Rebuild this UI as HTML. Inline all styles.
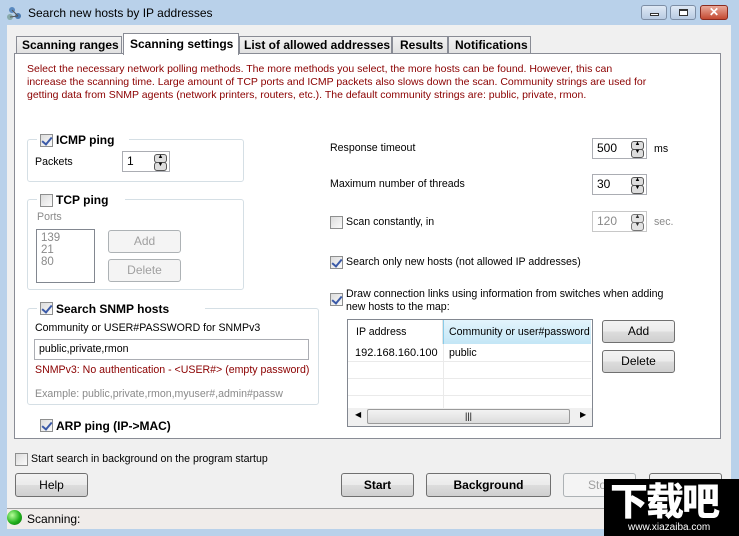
<!DOCTYPE html>
<html><head><meta charset="utf-8"><style>
*{margin:0;padding:0;box-sizing:border-box}
body{width:739px;height:536px;overflow:hidden;background:#b9d1ea;font-family:"Liberation Sans",sans-serif;font-size:10.6px;color:#000;position:relative}
.a{position:absolute;white-space:nowrap}
.cb{position:absolute;width:13px;height:13px;border:1px solid #8e8f8f;background:linear-gradient(135deg,#dcdcdc,#fbfbfb)}
.cb.on::after{content:"";position:absolute;left:3px;top:0px;width:4px;height:8px;border:solid #3b5aa8;border-width:0 2px 2px 0;transform:rotate(40deg)}
.grp{position:absolute;border:1px solid #d5dfe5;border-radius:3px}
.btn{position:absolute;border:1px solid #707070;border-radius:3px;background:linear-gradient(#f2f2f2 0,#ebebeb 50%,#dddddd 51%,#cfcfcf 100%);text-align:center;font-size:12px}
.btn.dis{border-color:#adb2b5;background:#f4f4f4;color:#a0a0a0}
.b{font-weight:bold;font-size:12px}
.ed{position:absolute;border:1px solid #abadb3;background:#fff;padding:2px 0 0 4px;font-size:12px}
.sp{position:absolute;width:13px;height:17px;right:3px;top:2px}
.sp::before,.sp::after{position:absolute;left:1px;width:11px;height:7px;border:1px solid #555;border-radius:3px;background:#ddd;font-size:6px;line-height:5px;text-align:center;color:#000}
.sp::before{content:"▲";top:0}.sp::after{content:"▼";top:8px}
.red{color:#8b0000}
.gr{color:#8a8a8a}
</style></head><body>
<!-- title -->
<div class="a" style="left:6px;top:5px;width:16px;height:16px"><svg width="18" height="16"><circle cx="6" cy="5" r="3" fill="#5a8ac0"/><circle cx="12" cy="11" r="3" fill="#4a7ab0"/><circle cx="4" cy="12" r="3" fill="#8aa"/><path d="M6 5L12 11M4 12L12 11" stroke="#555"/></svg></div>
<div class="a" style="left:28px;top:6px;font-size:12px">Search new hosts by IP addresses</div>
<div class="a" style="left:641px;top:5px;width:26px;height:15px;border:1px solid #7d8ea5;border-radius:3px;background:linear-gradient(#dfe9f5,#b8cbe2)"><div class="a" style="left:8px;top:7px;width:9px;height:3px;border:1px solid #333;background:#fff"></div></div>
<div class="a" style="left:670px;top:5px;width:26px;height:15px;border:1px solid #7d8ea5;border-radius:3px;background:linear-gradient(#dfe9f5,#b8cbe2)"><div class="a" style="left:8px;top:3px;width:9px;height:7px;border:1px solid #333;border-top-width:2px;background:#fff"></div></div>
<div class="a" style="left:700px;top:5px;width:28px;height:15px;border:1px solid #8a2a1e;border-radius:3px;background:linear-gradient(#e9a99a,#c44a32);color:#fff;font-weight:bold;text-align:center;font-size:12px;line-height:13px">✕</div>
<!-- client -->
<div class="a" style="left:7px;top:25px;width:724px;height:504px;background:#f0f0f0"></div>
<!-- tabs -->
<div class="a" style="left:16px;top:36px;width:106px;height:18px;border:1px solid #898c95;border-bottom:none;background:linear-gradient(#f2f2f2,#e0e0e0)"></div>
<div class="a b" style="left:22px;top:38px">Scanning ranges</div>
<div class="a" style="left:239px;top:36px;width:153px;height:18px;border:1px solid #898c95;border-bottom:none;background:linear-gradient(#f2f2f2,#e0e0e0)"></div>
<div class="a b" style="left:244px;top:38px">List of allowed addresses</div>
<div class="a" style="left:392px;top:36px;width:56px;height:18px;border:1px solid #898c95;border-bottom:none;background:linear-gradient(#f2f2f2,#e0e0e0)"></div>
<div class="a b" style="left:400px;top:38px">Results</div>
<div class="a" style="left:448px;top:36px;width:83px;height:18px;border:1px solid #898c95;border-bottom:none;background:linear-gradient(#f2f2f2,#e0e0e0)"></div>
<div class="a b" style="left:455px;top:38px">Notifications</div>
<div class="a" style="left:14px;top:53px;width:707px;height:386px;border:1px solid #898c95;background:#fff"></div>
<div class="a" style="left:123px;top:33px;width:116px;height:22px;border:1px solid #898c95;border-bottom:none;background:#fff"></div>
<div class="a b" style="left:130px;top:37px">Scanning settings</div>
<!-- desc -->
<div class="a red" style="left:27px;top:63px;line-height:13px;font-size:10.5px">Select the necessary network polling methods. The more methods you select, the more hosts can be found. However, this can<br>increase the scanning time. Large amount of TCP ports and ICMP packets also slows down the scan. Community strings are used for<br>getting data from SNMP agents (network printers, routers, etc.). The default community strings are: public, private, rmon.</div>
<!-- ICMP -->
<div class="grp" style="left:27px;top:139px;width:217px;height:43px"></div>
<div class="a" style="left:37px;top:132px;width:92px;height:14px;background:#fff"></div>
<div class="cb on" style="left:40px;top:134px"></div>
<div class="a b" style="left:56px;top:133px">ICMP ping</div>
<div class="a" style="left:35px;top:156px">Packets</div>
<div class="ed" style="left:122px;top:151px;width:48px;height:21px">1<div class="sp"></div></div>
<!-- TCP -->
<div class="grp" style="left:27px;top:199px;width:217px;height:91px"></div>
<div class="a" style="left:37px;top:192px;width:88px;height:14px;background:#fff"></div>
<div class="cb" style="left:40px;top:194px"></div>
<div class="a b" style="left:56px;top:193px">TCP ping</div>
<div class="a gr" style="left:37px;top:211px">Ports</div>
<div class="a gr" style="left:36px;top:229px;width:59px;height:54px;border:1px solid #828790;padding:2px 0 0 4px;line-height:12px;font-size:11.5px">139<br>21<br>80</div>
<div class="btn dis" style="left:108px;top:230px;width:73px;height:23px;line-height:21px">Add</div>
<div class="btn dis" style="left:108px;top:259px;width:73px;height:23px;line-height:21px">Delete</div>
<!-- SNMP -->
<div class="grp" style="left:27px;top:308px;width:292px;height:97px"></div>
<div class="a" style="left:37px;top:301px;width:168px;height:14px;background:#fff"></div>
<div class="cb on" style="left:40px;top:302px"></div>
<div class="a b" style="left:56px;top:302px">Search SNMP hosts</div>
<div class="a" style="left:35px;top:322px">Community or USER#PASSWORD for SNMPv3</div>
<div class="ed" style="left:34px;top:339px;width:275px;height:21px;font-size:10.6px;padding-top:3px">public,private,rmon</div>
<div class="a red" style="left:35px;top:364px">SNMPv3: No authentication - &lt;USER#&gt; (empty password)</div>
<div class="a gr" style="left:35px;top:388px">Example: public,private,rmon,myuser#,admin#passw</div>
<!-- ARP -->
<div class="cb on" style="left:40px;top:419px"></div>
<div class="a b" style="left:56px;top:419px">ARP ping (IP-&gt;MAC)</div>
<!-- right -->
<div class="a" style="left:330px;top:142px">Response timeout</div>
<div class="ed" style="left:592px;top:138px;width:55px;height:21px">500<div class="sp"></div></div>
<div class="a" style="left:654px;top:143px">ms</div>
<div class="a" style="left:330px;top:178px">Maximum number of threads</div>
<div class="ed" style="left:592px;top:174px;width:55px;height:21px">30<div class="sp"></div></div>
<div class="cb" style="left:330px;top:216px"></div>
<div class="a" style="left:346px;top:216px">Scan constantly, in</div>
<div class="ed gr" style="left:592px;top:211px;width:55px;height:21px;border-color:#c8c8c8">120<div class="sp" style="opacity:.8"></div></div>
<div class="a gr" style="left:654px;top:216px">sec.</div>
<div class="cb on" style="left:330px;top:256px"></div>
<div class="a" style="left:346px;top:256px">Search only new hosts (not allowed IP addresses)</div>
<div class="cb on" style="left:330px;top:293px"></div>
<div class="a" style="left:346px;top:288px;line-height:13px">Draw connection links using information from switches when adding<br>new hosts to the map:</div>
<!-- table -->
<div class="a" style="left:347px;top:319px;width:246px;height:108px;border:1px solid #828790;background:#fff"></div>
<div class="a" style="left:348px;top:320px;width:95px;height:24px;border-right:1px solid #e5e5e5;background:#fff"></div>
<div class="a" style="left:443px;top:320px;width:148px;height:24px;background:linear-gradient(#e3f4fc,#c3e6f6);border-left:1px solid #88cbe8"></div>
<div class="a" style="left:356px;top:326px">IP address</div>
<div class="a" style="left:449px;top:326px">Community or user#password</div>
<div class="a" style="left:355px;top:347px;font-size:11px">192.168.160.100</div>
<div class="a" style="left:449px;top:347px">public</div>
<div class="a" style="left:348px;top:361px;width:243px;height:1px;background:#eaeaea"></div>
<div class="a" style="left:348px;top:378px;width:243px;height:1px;background:#eaeaea"></div>
<div class="a" style="left:348px;top:395px;width:243px;height:1px;background:#eaeaea"></div>
<div class="a" style="left:443px;top:344px;width:1px;height:64px;background:#eaeaea"></div>
<div class="a" style="left:348px;top:408px;width:244px;height:18px;background:#f0f0f0"></div>
<div class="a" style="left:367px;top:409px;width:203px;height:15px;border:1px solid #9a9a9a;border-radius:2px;background:linear-gradient(#f3f3f3,#dcdcdc);text-align:center;font-size:9px;line-height:13px">|||</div>
<div class="a" style="left:355px;top:410px;font-size:8px">◀</div>
<div class="a" style="left:580px;top:410px;font-size:8px">▶</div>
<div class="btn" style="left:602px;top:320px;width:73px;height:23px;line-height:21px">Add</div>
<div class="btn" style="left:602px;top:350px;width:73px;height:23px;line-height:21px">Delete</div>
<!-- bottom -->
<div class="cb" style="left:15px;top:453px"></div>
<div class="a" style="left:31px;top:453px">Start search in background on the program startup</div>
<div class="btn" style="left:15px;top:473px;width:73px;height:24px;line-height:22px">Help</div>
<div class="btn b" style="left:341px;top:473px;width:73px;height:24px;line-height:22px">Start</div>
<div class="btn b" style="left:426px;top:473px;width:125px;height:24px;line-height:22px">Background</div>
<div class="btn dis" style="left:563px;top:473px;width:73px;height:24px;line-height:22px;text-align:left;padding-left:24px">Stop</div>
<div class="btn" style="left:649px;top:473px;width:73px;height:24px"></div>
<!-- status -->
<div class="a" style="left:7px;top:508px;width:724px;height:21px;background:#f0ecea;border-top:1px solid #a0a0a0"></div>
<div class="a" style="left:7px;top:510px;width:15px;height:15px;border-radius:50%;background:radial-gradient(circle at 35% 35%,#b8ff9a,#22b11d 55%,#0a6a0a)"></div>
<div class="a" style="left:27px;top:512px;font-size:12px">Scanning:</div>
<!-- watermark -->
<div class="a" style="left:604px;top:479px;width:135px;height:57px;background:#000"></div>
<div class="a" style="left:610px;top:477px;color:#fff;font-family:'Noto Sans CJK SC',sans-serif;font-weight:900;font-size:38px;line-height:44px;letter-spacing:-2px">下载吧</div>
<div class="a" style="left:628px;top:522px;color:#fff;font-size:10px">www.xiazaiba.com</div>
</body></html>
